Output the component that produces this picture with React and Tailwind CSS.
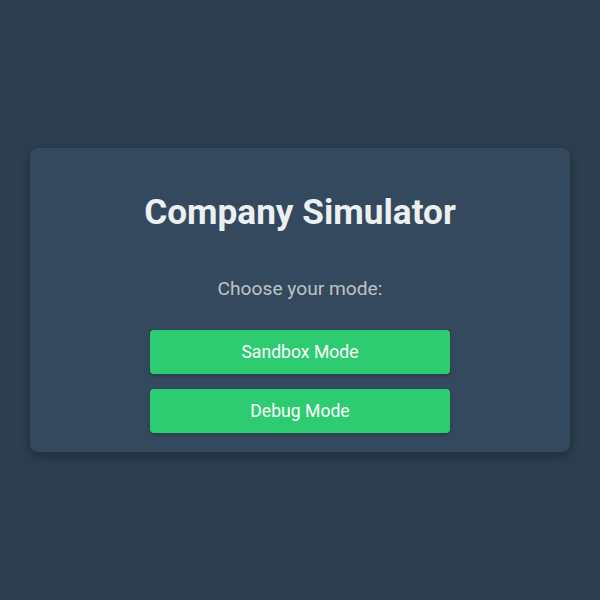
export default function App() {
  return (
    <div className="min-h-screen w-full bg-[#2c3e50] flex items-center justify-center font-['Roboto',sans-serif]">
      <div className="w-[540px] bg-[#34495e] rounded-lg shadow-[0_4px_12px_rgba(0,0,0,0.3)] pt-[45px] pb-[19px] flex flex-col items-center">
        <h1 className="text-[35.2px] leading-[38px] font-bold text-[#ecf0f1]">Company Simulator</h1>
        <p className="mt-[47px] text-[19.2px] leading-[22px] text-[#bdc3c7]">Choose your mode:</p>
        <div className="mt-[30px] flex flex-col gap-[15px] w-[300px]">
          <button className="h-[44px] rounded bg-[#2ecc71] text-white text-[17.6px] shadow-[0_2px_4px_rgba(0,0,0,0.2)]">
            Sandbox Mode
          </button>
          <button className="h-[44px] rounded bg-[#2ecc71] text-white text-[17.6px] shadow-[0_2px_4px_rgba(0,0,0,0.2)]">
            Debug Mode
          </button>
        </div>
      </div>
    </div>
  );
}
